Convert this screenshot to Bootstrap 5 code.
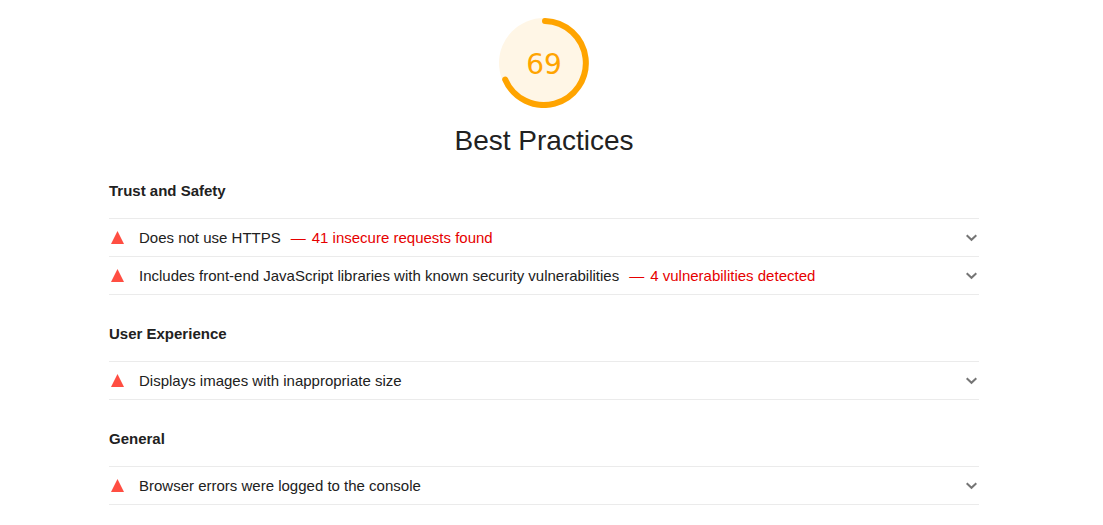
<!DOCTYPE html>
<html lang="en">
<head>
<meta charset="utf-8">
<meta name="viewport" content="width=device-width, initial-scale=1">
<title>Best Practices</title>
<link href="https://cdn.jsdelivr.net/npm/bootstrap@5.3.0/dist/css/bootstrap.min.css" rel="stylesheet">
<style>
  body { font-family: "Liberation Sans", Arial, sans-serif; font-size: 15px; line-height: 22px; color: #212121; background: #fff; padding-right: 15px; }
  .report { max-width: 870px; padding-top: 18px; }
  .gauge { width: 90px; height: 90px; }
  .gauge text { font: 28px "DejaVu Sans", Verdana, sans-serif; fill: #ffa400; text-anchor: middle; }
  .report-title { font-size: 28px; line-height: 36px; margin: 15px 0 21px; }
  .audit-group { margin-bottom: 28px; }
  .group-title { font-size: 15px; line-height: 22px; margin-bottom: 16px; }
  .audit-list { border-top: 1px solid #ebebeb; }
  .audit { border-bottom: 1px solid #ebebeb; }
  .audit-toggle { height: 37px; padding: 0 2px; color: inherit; }
  .audit-toggle .title { margin-left: 15px; }
  .audit-toggle .detail { margin-left: 10px; color: #e60000; }
  .audit-toggle .detail span { margin-left: 6px; }
</style>
</head>
<body>
<main class="report mx-auto">
  <header class="text-center">
    <svg class="gauge d-block mx-auto" viewBox="0 0 90 90" role="img" aria-label="Score 69">
      <circle cx="45" cy="45" r="45" fill="#fff6e6"/>
      <path d="M46 3A42 42 0 1 1 6.200 61.500" fill="none" stroke="#ffa400" stroke-width="6" stroke-linecap="round"/>
      <text x="45" y="56">69</text>
    </svg>
    <h1 class="report-title fw-normal">Best Practices</h1>
  </header>

  <section class="audit-group">
    <h2 class="group-title fw-bold">Trust and Safety</h2>
    <ul class="audit-list list-unstyled mb-0">
      <li class="audit">
        <button type="button" class="audit-toggle d-flex align-items-center w-100 border-0 bg-transparent text-start">
          <svg width="13" height="13" viewBox="0 0 13 13" aria-hidden="true"><path d="M6.500 0L13 13H0z" fill="#ff4e42"/></svg>
          <span class="title">Does not use HTTPS</span><span class="detail">—<span>41 insecure requests found</span></span>
          <svg class="ms-auto" width="11" height="8" viewBox="0 0 11 8" aria-hidden="true"><path d="M.7 1.200L5.500 5.800L10.300 1.200" fill="none" stroke="#757575" stroke-width="2"/></svg>
        </button>
      </li>
      <li class="audit">
        <button type="button" class="audit-toggle d-flex align-items-center w-100 border-0 bg-transparent text-start">
          <svg width="13" height="13" viewBox="0 0 13 13" aria-hidden="true"><path d="M6.500 0L13 13H0z" fill="#ff4e42"/></svg>
          <span class="title">Includes front-end JavaScript libraries with known security vulnerabilities</span><span class="detail">—<span>4 vulnerabilities detected</span></span>
          <svg class="ms-auto" width="11" height="8" viewBox="0 0 11 8" aria-hidden="true"><path d="M.7 1.200L5.500 5.800L10.300 1.200" fill="none" stroke="#757575" stroke-width="2"/></svg>
        </button>
      </li>
    </ul>
  </section>

  <section class="audit-group">
    <h2 class="group-title fw-bold">User Experience</h2>
    <ul class="audit-list list-unstyled mb-0">
      <li class="audit">
        <button type="button" class="audit-toggle d-flex align-items-center w-100 border-0 bg-transparent text-start">
          <svg width="13" height="13" viewBox="0 0 13 13" aria-hidden="true"><path d="M6.500 0L13 13H0z" fill="#ff4e42"/></svg>
          <span class="title">Displays images with inappropriate size</span>
          <svg class="ms-auto" width="11" height="8" viewBox="0 0 11 8" aria-hidden="true"><path d="M.7 1.200L5.500 5.800L10.300 1.200" fill="none" stroke="#757575" stroke-width="2"/></svg>
        </button>
      </li>
    </ul>
  </section>

  <section>
    <h2 class="group-title fw-bold">General</h2>
    <ul class="audit-list list-unstyled mb-0">
      <li class="audit">
        <button type="button" class="audit-toggle d-flex align-items-center w-100 border-0 bg-transparent text-start">
          <svg width="13" height="13" viewBox="0 0 13 13" aria-hidden="true"><path d="M6.500 0L13 13H0z" fill="#ff4e42"/></svg>
          <span class="title">Browser errors were logged to the console</span>
          <svg class="ms-auto" width="11" height="8" viewBox="0 0 11 8" aria-hidden="true"><path d="M.7 1.200L5.500 5.800L10.300 1.200" fill="none" stroke="#757575" stroke-width="2"/></svg>
        </button>
      </li>
    </ul>
  </section>
</main>
<script src="https://cdn.jsdelivr.net/npm/bootstrap@5.3.0/dist/js/bootstrap.bundle.min.js"></script>
</body>
</html>
